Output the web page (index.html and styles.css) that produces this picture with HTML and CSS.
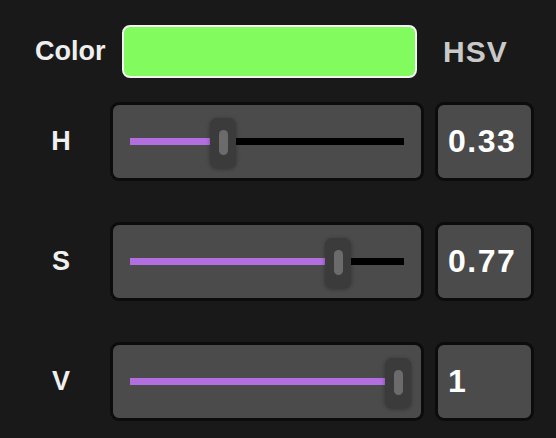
FILE: index.html
```html
<!DOCTYPE html>
<html>
<head>
<meta charset="utf-8">
<link rel="stylesheet" href="styles.css">
</head>
<body>
<div class="panel">
  <div class="top">
    <span class="color-label">Color</span>
    <div class="swatch"></div>
    <span class="mode">HSV</span>
  </div>
  <div class="rows">
    <div class="label">H</div>
    <div class="slider"><div class="track"><div class="fill" style="width:80px"></div><div class="thumb" style="left:80px"><div class="grip"></div></div></div></div>
    <div class="value">0.33</div>

    <div class="label">S</div>
    <div class="slider"><div class="track"><div class="fill" style="width:195px"></div><div class="thumb" style="left:195px"><div class="grip"></div></div></div></div>
    <div class="value">0.77</div>

    <div class="label">V</div>
    <div class="slider"><div class="track"><div class="fill" style="width:255px"></div><div class="thumb" style="left:255px"><div class="grip"></div></div></div></div>
    <div class="value">1</div>
  </div>
</div>
</body>
</html>
```
FILE: styles.css
```css
html, body {
  margin: 0;
  padding: 0;
  background: #191919;
}
body {
  font-family: "Liberation Sans", Arial, sans-serif;
  font-weight: bold;
  width: 556px;
  height: 438px;
  overflow: hidden;
}
.panel {
  padding-top: 25px;
}
.top {
  display: flex;
  align-items: center;
  height: 53px;
  padding-left: 35px;
}
.color-label {
  font-size: 27px;
  color: #efefef;
  width: 87px;
}
.swatch {
  box-sizing: border-box;
  width: 295px;
  height: 53px;
  border: 2px solid #f4f4f4;
  border-radius: 8px;
  background: #82fb5f;
}
.mode {
  margin-left: 26px;
  font-size: 30px;
  letter-spacing: 1px;
  color: #c9c9c9;
}
.rows {
  margin-top: 24px;
  display: grid;
  grid-template-columns: 99px 314px 99px;
  grid-auto-rows: 79px;
  column-gap: 11px;
  row-gap: 41px;
}
.label {
  display: flex;
  align-items: center;
  justify-content: center;
  padding-left: 23px;
  font-size: 27px;
  color: #f0f0f0;
}
.slider {
  box-sizing: border-box;
  border: 3px solid #0c0c0c;
  border-radius: 9px;
  background: #4b4b4b;
  padding: 0 17px;
  display: flex;
  align-items: center;
}
.track {
  position: relative;
  flex: 1;
  height: 7px;
  background: #000;
}
.fill {
  position: absolute;
  left: 0;
  top: 0;
  bottom: 0;
  background: #b36fe0;
}
.thumb {
  position: absolute;
  top: 50%;
  width: 26px;
  height: 50px;
  margin-top: -24px;
  border-radius: 7px;
  background: #3b3b3b;
  box-shadow: 0 1px 4px rgba(0, 0, 0, 0.35);
  display: flex;
  align-items: center;
  justify-content: center;
}
.grip {
  width: 9px;
  height: 25px;
  border-radius: 5px;
  background: #6b6b6b;
}
.value {
  box-sizing: border-box;
  border: 3px solid #0c0c0c;
  border-radius: 9px;
  background: #4b4b4b;
  padding-left: 10px;
  display: flex;
  align-items: center;
  font-size: 32px;
  letter-spacing: 1.5px;
  color: #ffffff;
}
```
